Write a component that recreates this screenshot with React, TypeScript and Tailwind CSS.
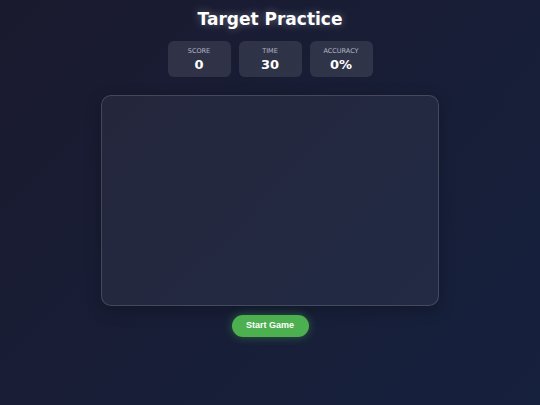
import React from 'react'

const stats = [
  { label: 'SCORE', value: '0' },
  { label: 'TIME', value: '30' },
  { label: 'ACCURACY', value: '0%' },
]

export default function App() {
  return (
    <div className="min-h-screen w-full bg-[linear-gradient(135deg,#1a1a2e,#16213e)] flex flex-col items-center text-white font-['DejaVu_Sans',sans-serif]">
      <h1 className="mt-[7px] text-[17px] leading-[24px] font-bold [text-shadow:0_0_8px_rgba(255,255,255,0.35)]">
        Target Practice
      </h1>
      <div className="mt-[10px] flex gap-[8px]">
        {stats.map((s) => (
          <div
            key={s.label}
            className="w-[63px] h-[36px] rounded-[6px] bg-white/10 flex flex-col items-center pt-[6px]"
          >
            <span className="text-[6.5px] leading-[9px] text-[#b4b6c4]">{s.label}</span>
            <span className="text-[13px] leading-[17px] font-bold">{s.value}</span>
          </div>
        ))}
      </div>
      <div className="mt-[18px] w-[338px] h-[211px] rounded-[10px] border border-white/15 bg-white/[0.05] shadow-[0_4px_16px_rgba(0,0,0,0.25)]" />
      <button className="mt-[9px] w-[77px] h-[22px] rounded-full bg-[#4caf50] text-white text-[9px] font-bold font-['Liberation_Sans',Arial,sans-serif] shadow-[0_0_10px_rgba(76,175,80,0.45)]">
        Start Game
      </button>
    </div>
  )
}
